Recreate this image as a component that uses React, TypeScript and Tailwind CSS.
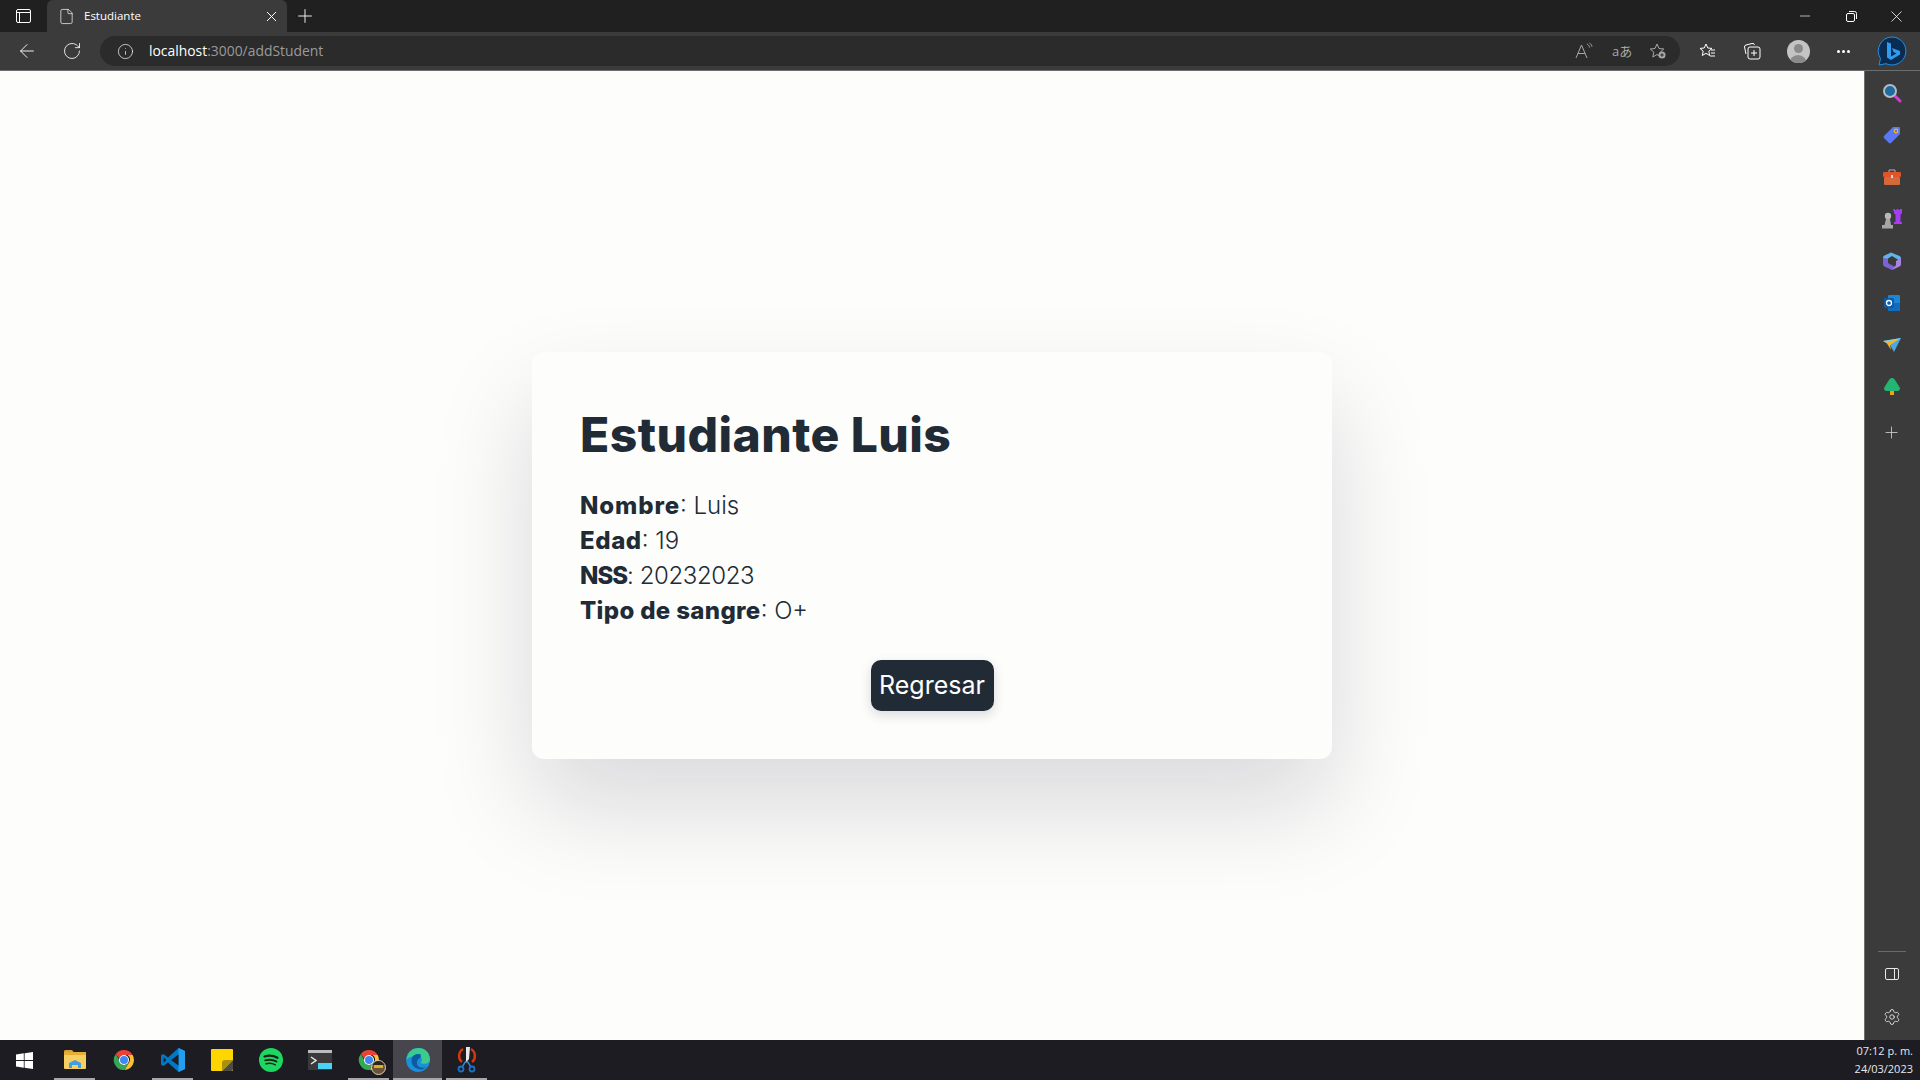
import { Plus, X, Minus, ArrowLeft, RotateCw, Info, Settings, File } from "lucide-react"

const pageFont = "font-['Inter',sans-serif]"

function ChromeIcon({ size = 24 }: { size?: number }) {
  return (
    <svg width={size} height={size} viewBox="0 0 48 48">
      <path d="M24 4a20 20 0 0 1 17.300 10H24a10 10 0 0 0-9.600 7.200L7.600 12A20 20 0 0 1 24 4z" fill="#ea4335" />
      <path d="M41.300 14A20 20 0 0 1 25 44l8.600-14.600A10 10 0 0 0 31 14z" fill="#fbc02d" />
      <path d="M25 44A20 20 0 0 1 7.600 12l8.600 15a10 10 0 0 0 10.400 6.800l7-4.400z" fill="#34a853" />
      <circle cx="24" cy="24" r="10" fill="#fff" />
      <circle cx="24" cy="24" r="8" fill="#4285f4" />
    </svg>
  )
}

function EdgeIcon() {
  return (
    <svg width="26" height="26" viewBox="0 0 48 48">
      <circle cx="24" cy="24" r="22" fill="#1b8fd8" />
      <path d="M3 22C5 9 15 2 25 2c12 0 21 9 21 20 0 6-5 9-10 9-4 0-7-1-7-3 3-2 3-5 1-8-3-4-9-6-14-4-6 2-11 5-13 6z" fill="#3ccb8e" />
      <path d="M29 14c-8-3-17 2-17 12 0 9 9 17 20 15 3-1 5-2 7-4-8 3-17 0-17-8 0-5 3-8 7-9z" fill="#0c59a4" />
    </svg>
  )
}

function TaskItem({ children, mark, active }: { children: React.ReactNode; mark?: boolean; active?: boolean }) {
  return (
    <div className={`relative flex h-10 w-[49px] items-center justify-center ${active ? "bg-[#46464c]" : ""}`}>
      {children}
      {mark && <div className={`absolute bottom-0 h-0.5 bg-[#a8a8a8] ${active ? "inset-x-0" : "inset-x-1"}`} />}
    </div>
  )
}

function SideIcon({ children }: { children: React.ReactNode }) {
  return <div className="flex h-[42px] w-full items-center justify-center pr-[2px]">{children}</div>
}

function Taskbar() {
  return (
    <div className="flex h-10 items-center bg-[#1c1c22] text-white">
      <div className="flex h-10 w-[50px] items-center justify-center pr-[2px]">
        <svg width="17" height="17" viewBox="0 0 17 17" fill="#fff">
          <path d="M0 2.400 7.800 1.300v6.800H0zM8.600 1.200 17 0v8.100H8.600zM0 8.900h7.800v6.800L0 14.600zM8.600 8.900H17V17l-8.400-1.200z" />
        </svg>
      </div>
      <TaskItem mark>
        <svg width="22" height="20" viewBox="0 0 22 20">
          <path d="M0 1.500C0 .7.7 0 1.500 0H8l2 2.500H0z" fill="#d9a22e" />
          <rect y="2" width="22" height="17" rx="1" fill="#f6cf62" />
          <rect y="2" width="22" height="3" fill="#e4ae37" />
          <path d="M5 18v-5l6-3 6 3v5h-3v-3H8v3z" fill="#3f9fe0" />
        </svg>
      </TaskItem>
      <TaskItem>
        <ChromeIcon />
      </TaskItem>
      <TaskItem mark>
        <svg width="24" height="24" viewBox="0 0 24 24">
          <path d="M17.500 0 24 3v18l-6.500 3L7 14.500l-4.500 3.500L0 16.700V7.300L2.500 6 7 9.500z" fill="#0078c8" />
          <path d="M17.500 0 24 3v18l-6.500 3z" fill="#22a0ef" />
          <path d="M17.500 6.500v11L10 12z" fill="#1c1c22" />
          <path d="M2.600 9.300 5.300 12l-2.700 2.700z" fill="#1c1c22" />
        </svg>
      </TaskItem>
      <TaskItem>
        <svg width="22" height="22" viewBox="0 0 22 22">
          <rect width="22" height="22" rx="1" fill="#ffd500" />
          <path d="M22 11v9a2 2 0 0 1-2 2h-9z" fill="#4a4a4a" />
          <path d="M22 11h-8a3 3 0 0 0-3 3v8z" fill="#a98f12" />
        </svg>
      </TaskItem>
      <TaskItem>
        <svg width="24" height="24" viewBox="0 0 24 24">
          <circle cx="12" cy="12" r="12" fill="#1ed760" />
          <g fill="none" stroke="#14231a" strokeLinecap="round">
            <path d="M5.500 8.500c4.500-1.300 9-1 13 1.300" strokeWidth="2.200" />
            <path d="M6.200 12.300c4-1 7.800-.7 11.300 1.200" strokeWidth="1.800" />
            <path d="M7 15.800c3.300-.8 6.500-.5 9.300 1" strokeWidth="1.500" />
          </g>
        </svg>
      </TaskItem>
      <TaskItem>
        <svg width="24" height="20" viewBox="0 0 24 20">
          <rect width="24" height="20" rx="1" fill="#3a3a3a" />
          <rect width="24" height="3" fill="#bdbdbd" />
          <path d="m3 7 5 3.500L3 14" fill="none" stroke="#e8e8e8" strokeWidth="1.500" />
          <rect x="10" y="13" width="14" height="6" fill="#46d3f5" />
        </svg>
      </TaskItem>
      <TaskItem mark>
        <div className="relative">
          <ChromeIcon />
          <div className="absolute -bottom-[3px] -right-[5px] h-[15px] w-[15px] overflow-hidden rounded-full border border-[#d8d2c0] bg-[#6b5238]">
            <div className="h-[4px] bg-[#2a2420]" />
            <div className="mx-auto h-[3px] w-[9px] bg-[#d8b020]" />
          </div>
        </div>
      </TaskItem>
      <TaskItem mark active>
        <EdgeIcon />
      </TaskItem>
      <TaskItem mark>
        <svg width="20" height="26" viewBox="0 0 20 26">
          <path d="M6 2C1 5 1 12 5 15" fill="none" stroke="#d4380d" strokeWidth="2.500" />
          <path d="M14 2c5 3 5 10 1 13" fill="none" stroke="#d4380d" strokeWidth="2.500" />
          <path d="M9 0h4l-1 12-3 4z" fill="#e8e8e8" />
          <path d="M9 14 5 20m5-6 4 6" stroke="#2b88d8" strokeWidth="1.500" />
          <circle cx="4" cy="22" r="2.500" fill="none" stroke="#1a73c8" strokeWidth="1.800" />
          <circle cx="15" cy="22" r="2.500" fill="none" stroke="#1a73c8" strokeWidth="1.800" />
        </svg>
      </TaskItem>
      <div className="ml-auto pr-[7px] text-right font-['Open_Sans',sans-serif] text-[11px] leading-[18px] text-[#e8e8e8]">
        <div>07:12 p. m.</div>
        <div>24/03/2023</div>
      </div>
    </div>
  )
}

function Sidebar() {
  return (
    <div className="flex w-14 flex-col border-l border-[#6e6e6e] bg-[#3b3b3b] pt-px">
      <SideIcon>
        <svg width="20" height="20" viewBox="0 0 20 20">
          <path d="m12 12 6 6" stroke="#d63ad6" strokeWidth="3" strokeLinecap="round" />
          <circle cx="8" cy="8" r="6" fill="#1f6a9e" stroke="#b4bcc4" strokeWidth="2" />
        </svg>
      </SideIcon>
      <SideIcon>
        <svg width="18" height="18" viewBox="0 0 18 18">
          <path d="M10 1h6a1 1 0 0 1 1 1v6l-9 9a1.500 1.500 0 0 1-2 0L1 12a1.500 1.500 0 0 1 0-2z" fill="#5a78f5" />
          <circle cx="13" cy="5" r="1.800" fill="none" stroke="#f2b90f" strokeWidth="1.200" />
        </svg>
      </SideIcon>
      <SideIcon>
        <svg width="18" height="16" viewBox="0 0 18 16">
          <path d="M6 3V1h6v2" fill="none" stroke="#b0b0b0" strokeWidth="1" />
          <rect y="3" width="18" height="5" rx="1" fill="#e0532a" />
          <rect x="1" y="8" width="16" height="8" rx="1" fill="#d4693a" />
          <rect x="8" y="6" width="2" height="3" fill="#d8d8d8" />
        </svg>
      </SideIcon>
      <SideIcon>
        <svg width="20" height="20" viewBox="0 0 20 20">
          <path d="M11 0h2v2h1.500V0h2v2H18V0h2v5l-1.500 2v7h1.500v2h-8v-2h1.500V7L12 5z" fill="#a53df0" transform="translate(0 -1)" />
          <circle cx="6" cy="7" r="3.200" fill="#b8b8b8" />
          <path d="M4 10h4l1 6h2v3.500H0V16h2.500z" fill="#a6a6a6" />
        </svg>
      </SideIcon>
      <SideIcon>
        <svg width="18" height="18" viewBox="0 0 18 18">
          <path d="M8 .5 16.500 4c1 .5 1.500 1.300 1.500 2.500v3L9 4 5 6.500V13L1.500 11C.5 10.500 0 9.700 0 8.500V6c0-1.200.5-2 1.500-2.500z" fill="#5fb4ea" />
          <path d="M0 6v6c0 1.200.5 2 1.500 2.500L9 18l4-2.500L5 11V6.500z" fill="#7a63d6" />
          <path d="M18 6v6c0 1.200-.5 2-1.500 2.500L9 18l4-5V9z" fill="#a883e0" />
          <path d="M6.500 6 12.500 9l-6 3.500z" fill="#3b3b3b" />
        </svg>
      </SideIcon>
      <SideIcon>
        <svg width="16" height="16" viewBox="0 0 16 16">
          <rect x="4" y="0" width="12" height="16" rx="1" fill="#1a86d4" />
          <path d="M4 8h12v7a1 1 0 0 1-1 1H5a1 1 0 0 1-1-1z" fill="#0f6cbd" />
          <rect x="0" y="3" width="10" height="10" rx="1" fill="#0a5ca8" />
          <circle cx="5" cy="8" r="2.500" fill="none" stroke="#fff" strokeWidth="1.300" />
        </svg>
      </SideIcon>
      <SideIcon>
        <svg width="18" height="14" viewBox="0 0 18 14">
          <path d="M0 3 18 0 11 14 7 7z" fill="#4ba8e0" />
          <path d="M0 3 18 0 7 7z" fill="#7fd0f2" />
          <path d="M3 4 16 1 7 7l1 5z" fill="#f2b620" />
        </svg>
      </SideIcon>
      <SideIcon>
        <svg width="16" height="18" viewBox="0 0 16 18">
          <path d="M8 0c1 0 2 .5 3 2l4.500 7c1 1.700 0 4-2 4H2.500c-2 0-3-2.300-2-4L5 2c1-1.500 2-2 3-2z" fill="#22b573" />
          <rect x="6" y="13" width="4" height="4" fill="#e8a317" />
        </svg>
      </SideIcon>
      <div className="mt-[3px] flex h-[42px] w-full items-center justify-center pr-[2px] text-[#d8d8d8]">
        <Plus size={19} strokeWidth={1} />
      </div>
      <div className="mt-auto flex flex-col items-center pr-[2px]">
        <div className="h-px w-7 bg-[#6a6a6a]" />
        <div className="mt-[16px] flex h-[12px] w-[14px] rounded-[2px] border border-[#e8e8e8]">
          <div className="ml-auto w-1 border-l border-[#e8e8e8]" />
        </div>
        <div className="mb-[14px] mt-[28px] text-[#f0f0f0]">
          <Settings size={18} strokeWidth={1.100} />
        </div>
      </div>
    </div>
  )
}

export default function App() {
  return (
    <div className="flex h-screen flex-col overflow-hidden bg-[#fdfdfb]">
      {/* barra de titulo */}
      <div className="flex h-8 items-end bg-[#202020] font-['Open_Sans',sans-serif] text-white">
        <div className="flex h-8 w-[47px] items-center justify-center">
          <div className="flex h-[14px] w-[15px] flex-col rounded-[2px] border border-white">
            <div className="mt-[2px] flex flex-1 border-t border-white">
              <div className="w-[3px] border-r border-white" />
            </div>
          </div>
        </div>
        <div className="flex h-[32px] w-[240px] items-center rounded-t-[6px] bg-[#3b3b3b] pl-[11px] pr-[7px]">
          <File size={17} strokeWidth={1} />
          <span className="ml-[9px] flex-1 text-[11.500px]">Estudiante</span>
          <X size={17} strokeWidth={1.400} />
        </div>
        <div className="flex h-8 w-9 items-center justify-center">
          <Plus size={22} strokeWidth={1} />
        </div>
        <div className="ml-auto flex h-8 items-center">
          <div className="flex w-[46px] justify-center">
            <Minus size={16} strokeWidth={1} />
          </div>
          <div className="flex w-[46px] justify-center">
            <svg width="11" height="11" viewBox="0 0 11 11" fill="none" stroke="#fff">
              <rect x=".5" y="2.500" width="8" height="8" rx="1.500" />
              <path d="M3 .5h5.500a2 2 0 0 1 2 2V8" />
            </svg>
          </div>
          <div className="flex w-[46px] justify-center pr-[1px]">
            <X size={19} strokeWidth={1} />
          </div>
        </div>
      </div>

      {/* barra de direcciones */}
      <div className="flex h-[38px] items-center bg-[#3b3b3b] font-['Open_Sans',sans-serif] text-white">
        <div className="flex w-[54px] justify-center">
          <ArrowLeft size={22} strokeWidth={1} />
        </div>
        <div className="flex w-[36px] justify-center">
          <RotateCw size={20} strokeWidth={1} />
        </div>
        <div className="ml-[10px] flex h-[30px] w-[1580px] items-center rounded-full bg-[#2b2b2b] pl-[17px] pr-[13px]">
          <Info size={17} strokeWidth={1} />
          <span className="ml-[15px] text-[13.900px]">
            localhost<span className="text-[#9a9a9a]">:3000/addStudent</span>
          </span>
          <div className="ml-auto flex items-center gap-[17px] text-[#a8a8a8]">
            <svg width="20" height="18" viewBox="0 0 20 18" fill="none" stroke="#a8a8a8" strokeWidth="1">
              <path d="m1 16 5.500-13L12 16M3 11.500h7" />
              <path d="M12 2c1.500.7 2.300 2 2.500 3.500M14.500 1c1.500 1 2.300 2.300 2.500 3.800" />
            </svg>
            <span className="w-5 whitespace-nowrap text-center font-['Open_Sans','Noto_Sans_CJK_JP',sans-serif] text-[13px] leading-none">aあ</span>
            <svg width="18" height="18" viewBox="0 0 18 18">
              <path d="m8 2 2 4.500 4.800.5-3.600 3.200 1 4.800L8 12.500 3.800 15l1-4.800L1.200 7 6 6.500z" fill="none" stroke="#a8a8a8" />
              <circle cx="13" cy="13" r="3.500" fill="#a8a8a8" />
              <path d="M11.200 13h3.600M13 11.200v3.600" stroke="#2b2b2b" />
            </svg>
          </div>
        </div>
        <div className="ml-[17px] flex w-[22px] justify-center">
          <svg width="18" height="18" viewBox="0 0 18 18" fill="none" stroke="#fff">
            <path d="m7 2 1.800 4 4.200.4-3.200 2.800.9 4.300L7 11.300l-3.700 2.200.9-4.300L1 6.400 5.200 6z" />
            <path d="M12 8h4M12 11h4M11 14h5" />
          </svg>
        </div>
        <div className="ml-[22px] flex w-[22px] justify-center">
          <svg width="18" height="18" viewBox="0 0 18 18" fill="none" stroke="#fff">
            <path d="M3 12 1.500 5A2 2 0 0 1 3 3l6-1.500A2 2 0 0 1 11.500 3" />
            <rect x="5" y="5" width="12" height="12" rx="2" />
            <path d="M11 8v6M8 11h6" />
          </svg>
        </div>
        <div className="ml-[12px] flex w-[46px] justify-center">
          <div className="relative h-[23px] w-[23px] overflow-hidden rounded-full bg-[#c4c4c4]">
            <div className="mx-auto mt-[4px] h-[9px] w-[9px] rounded-full bg-[#8a8a8a]" />
            <div className="mx-auto mt-[2px] h-[10px] w-[18px] rounded-t-full bg-[#8a8a8a]" />
          </div>
        </div>
        <div className="ml-[11px] flex w-[22px] items-center justify-center gap-[2px]">
          <div className="h-[3px] w-[3px] rounded-full bg-white" />
          <div className="h-[3px] w-[3px] rounded-full bg-white" />
          <div className="h-[3px] w-[3px] rounded-full bg-white" />
        </div>
        <div className="ml-[23px] flex w-[30px] justify-center">
          <svg width="30" height="30" viewBox="0 0 30 30">
            <path d="M15 1a14 14 0 1 1-6 26.700L2 29l1.500-6.500A14 14 0 0 1 15 1z" fill="#0a2c52" stroke="#1f8fe8" />
            <path d="M10 6l4 1.500v13l5.500-3-3-1.400-1.500-4 8 3v3.500L14 24l-4-2.500z" fill="#2f9cf0" />
          </svg>
        </div>
      </div>

      <div className="flex min-h-0 flex-1 border-t border-[#6e6e6e]">
        <main className="flex flex-1 items-center justify-center">
          <div className={`w-[800px] rounded-[12px] bg-[#fdfdfb] p-12 text-[#212b36] shadow-[0_48px_100px_0_rgba(17,12,46,0.15)] ${pageFont}`}>
            <h1 className="text-[48px] font-extrabold leading-[70px] tracking-[0.45px]">Estudiante Luis</h1>
            <div className="mt-[18px] text-[24px] font-light leading-[35px]">
              <p><strong className="font-extrabold tracking-[0.9px]">Nombre</strong>: Luis</p>
              <p><strong className="font-extrabold tracking-[0.6px]">Edad</strong>: 19</p>
              <p className="tracking-[-0.4px]"><strong className="font-extrabold tracking-[-1px]">NSS</strong>: 20232023</p>
              <p><strong className="font-extrabold tracking-[0.35px]">Tipo de sangre</strong>: O+</p>
            </div>
            <div className="mt-[32px] flex justify-center">
              <button className="h-[51px] w-[123px] rounded-[10px] bg-[#212b36] text-[25px] text-white shadow-[0_4px_12px_rgba(17,12,46,0.15)]">
                Regresar
              </button>
            </div>
          </div>
        </main>
        <Sidebar />
      </div>

      <Taskbar />
    </div>
  )
}
